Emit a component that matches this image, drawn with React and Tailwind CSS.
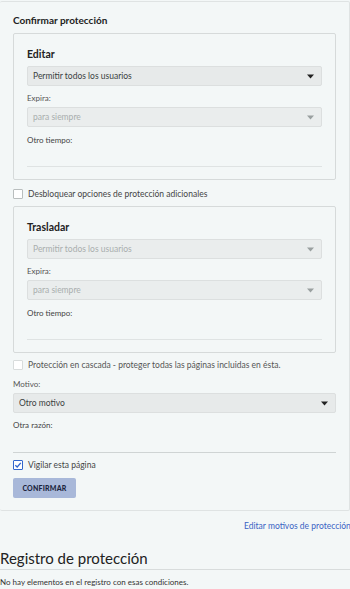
import React from "react";

const Caret = ({ dim }) => (
  <svg width="7" height="5" viewBox="0 0 7 5" className="shrink-0">
    <path d="M0 0.5 H7 L3.5 4.5 Z" fill={dim ? "#9aa0a0" : "#222"} />
  </svg>
);

const Select = ({ text, dim }) => (
  <div
    className={`flex h-[20px] items-center justify-between rounded-[2px] border border-[#dcdfdf] px-[5px] pr-[7px] text-[8.5px] leading-[10px] ${
      dim ? "bg-[#eaeded] text-[#a9aeae]" : "bg-[#e7eaea] text-[#3a3f3f]"
    }`}
  >
    <span>{text}</span>
    <Caret dim={dim} />
  </div>
);

const Box = ({ checked, dim }) =>
  checked ? (
    <span className="flex h-[10px] w-[10px] items-center justify-center rounded-[1px] border border-[#3366cc] bg-white">
      <svg width="8" height="8" viewBox="0 0 8 8">
        <path d="M1.3 4.2 L3.2 6 L6.8 1.8" stroke="#3366cc" strokeWidth="1.3" fill="none" />
      </svg>
    </span>
  ) : (
    <span className={`h-[10px] w-[10px] rounded-[1px] border bg-white ${dim ? "border-[#d8dcdc]" : "border-[#b9bebe]"}`} />
  );

const Group = ({ title, dim }) => (
  <div className="rounded-[2px] border border-[#d6dada] px-[13px] pb-[12px] pt-[14px]">
    <div className="text-[10.5px] font-bold leading-[12px] text-[#222]">{title}</div>
    <div className="mt-[6px]">
      <Select text="Permitir todos los usuarios" dim={dim} />
    </div>
    <div className="mt-[7px] text-[8px] leading-[10px] text-[#555]">Expira:</div>
    <div className="mt-[4px]">
      <Select text="para siempre" dim />
    </div>
    <div className="mt-[8px] text-[8px] leading-[10px] text-[#444]">Otro tiempo:</div>
    <div className="mt-[21px] h-px bg-[#dfe3e3]" />
  </div>
);

export default function App() {
  return (
    <div
      className="h-[589px] w-[350px] overflow-hidden bg-[#f3f7f7] text-[#333]"
      style={{ fontFamily: "Lato, 'Noto Sans', sans-serif" }}
    >
      <div className="mt-[1px] w-[350px] rounded-[2px] border border-l-0 border-[#dfe3e3] px-[13px] pb-[12px] pt-[12px]">
        <div className="text-[10px] font-bold leading-[12px] text-[#222]">Confirmar protección</div>
        <div className="mt-[7px]">
          <Group title="Editar" />
        </div>
        <label className="mt-[8px] flex h-[12px] items-center gap-[5px] text-[8.5px] leading-[12px] text-[#444]">
          <Box />
          <span>Desbloquear opciones de protección adicionales</span>
        </label>
        <div className="mt-[6px]">
          <Group title="Trasladar" dim />
        </div>
        <label className="mt-[6px] flex h-[12px] items-center gap-[5px] text-[8.5px] leading-[12px] text-[#555]">
          <Box dim />
          <span>Protección en cascada - proteger todas las páginas incluidas en ésta.</span>
        </label>
        <div className="mt-[8px] text-[8px] leading-[10px] text-[#555]">Motivo:</div>
        <div className="mt-[4px]">
          <Select text="Otro motivo" />
        </div>
        <div className="mt-[7px] border-b border-[#cfd4d4] pb-[22px] text-[8px] leading-[10px] text-[#444]">
          Otra razón:
        </div>
        <label className="mt-[6px] flex h-[12px] items-center gap-[5px] text-[8.5px] leading-[12px] text-[#444]">
          <Box checked />
          <span>Vigilar esta página</span>
        </label>
        <button className="mt-[7px] flex h-[20px] w-[63px] items-center justify-center rounded-[2px] bg-[#a8b8d9] text-[7px] font-black tracking-[0.2px] text-[#1c2540]">
          CONFIRMAR
        </button>
      </div>
      <div className="mt-[10px] whitespace-nowrap pl-[244px] text-[8.5px] leading-[10px] text-[#3a63c4]">
        Editar motivos de protección
      </div>
      <div className="mt-[18px] border-b border-[#d8dcdc] pb-[2px] text-[15px] leading-[18px] text-[#222]">
        Registro de protección
      </div>
      <div className="mt-[7px] text-[8px] leading-[10px] text-[#333]">
        No hay elementos en el registro con esas condiciones.
      </div>
    </div>
  );
}
